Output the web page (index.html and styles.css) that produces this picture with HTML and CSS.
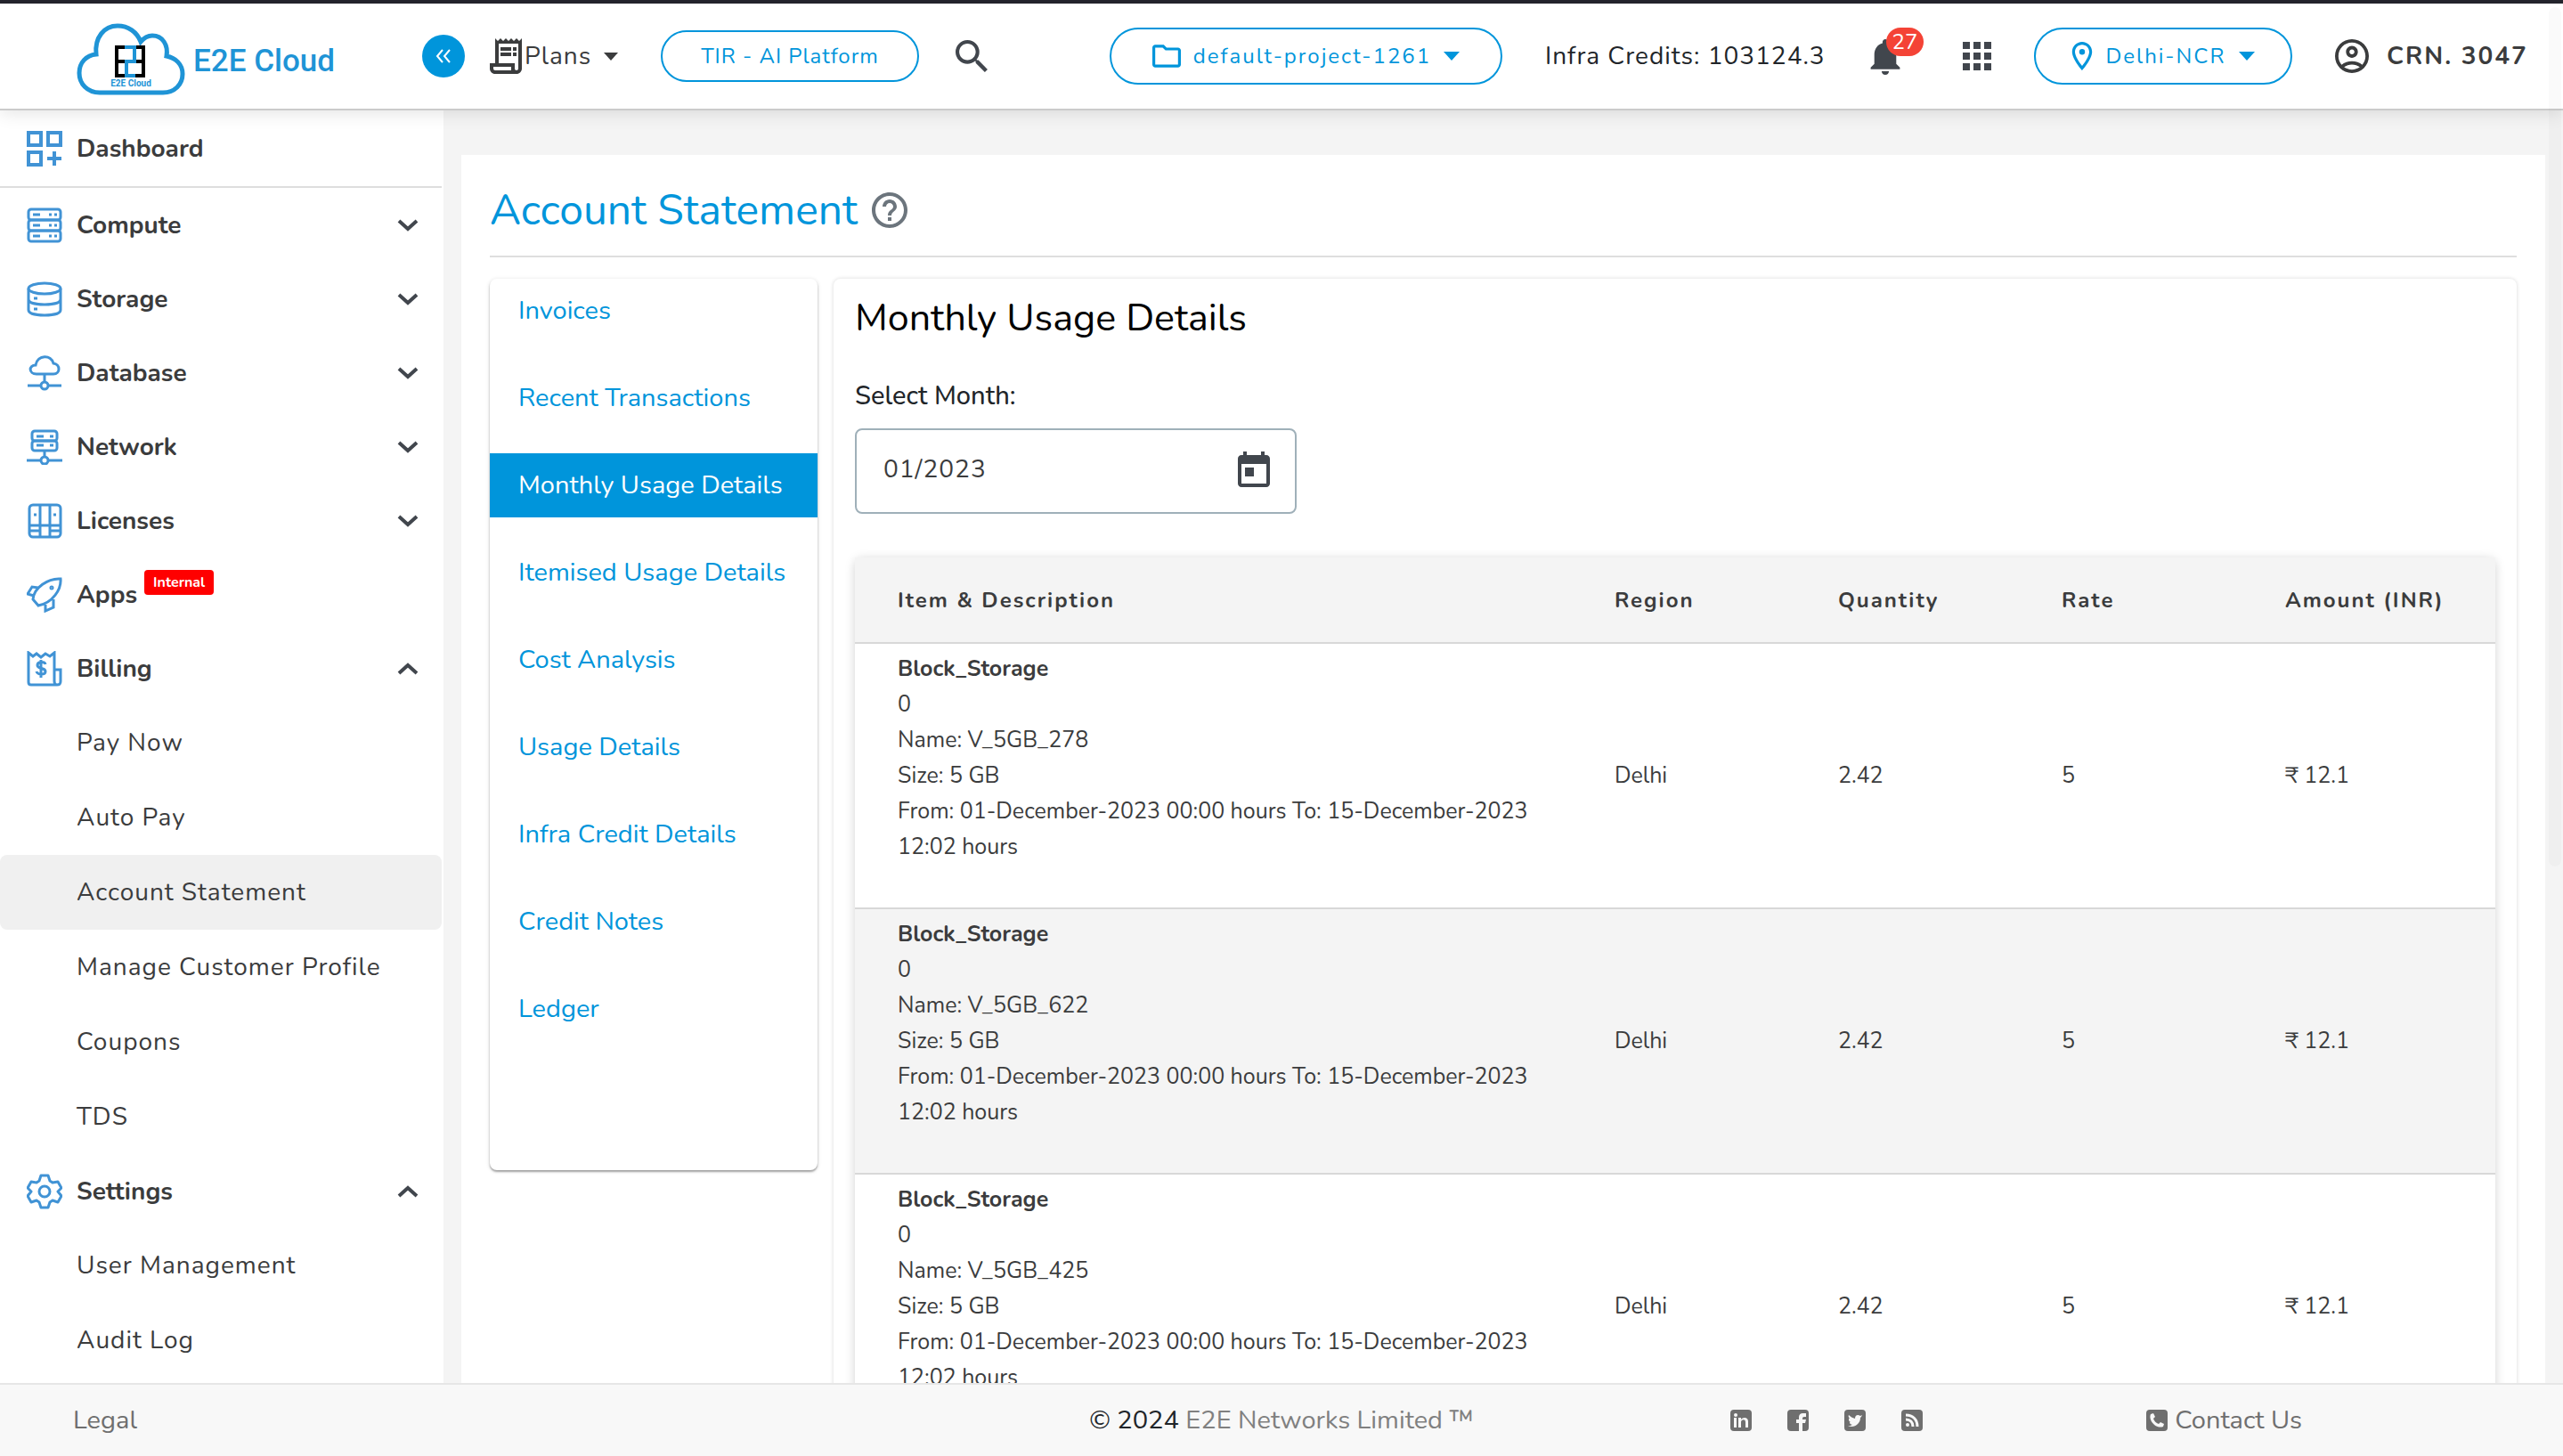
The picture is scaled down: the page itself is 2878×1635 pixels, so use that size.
FILE: index.html
```html
<!DOCTYPE html>
<html lang="en">
<head>
<meta charset="utf-8">
<title>Account Statement - E2E Cloud</title>
<meta name="viewport" content="width=device-width, initial-scale=1">
<link rel="stylesheet" href="styles.css">
</head>
<body>
<svg class="sprite" aria-hidden="true">
  <symbol id="chevron-down" viewBox="0 0 24 14"><path d="M2 2l10 9L22 2" fill="none" stroke="currentColor" stroke-width="4"/></symbol>
  <symbol id="chevron-up" viewBox="0 0 24 14"><path d="M2 12l10-9 10 9" fill="none" stroke="currentColor" stroke-width="4"/></symbol>
  <symbol id="caret" viewBox="0 0 18 10"><path d="M0 0h18L9 10z" fill="currentColor"/></symbol>
</svg>

<header class="topbar">
  <a class="brand" href="#">
    <svg class="brand-mark" viewBox="0 0 122 82" aria-hidden="true">
      <path d="M26 78C12 78 3 68 3 56c0-12 8-20 19-21C20 16 31 3 46 3c12 0 22 7 26 18 4-5 8-7 13-7 12 0 18 11 16 23 10 2 18 9 18 20 0 12-9 21-22 21z" fill="#fff" stroke="#1f94d6" stroke-width="5"/>
      <path d="M45 27h30v32H45zM45 43h10M66 43h9" fill="none" stroke="#000" stroke-width="4"/>
      <path d="M54 27h11v16h-9v16h10" fill="none" stroke="#1f94d6" stroke-width="4"/>
      <text class="brand-small" x="61" y="71" text-anchor="middle">E2E Cloud</text>
    </svg>
    <span class="brand-name">E2E Cloud</span>
  </a>
  <button class="collapse" type="button" aria-label="Collapse menu">
    <svg width="20" height="20" viewBox="0 0 20 20"><path d="M9 3l-6 7 6 7M17 3l-6 7 6 7" fill="none" stroke="#fff" stroke-width="2"/></svg>
  </button>
  <button class="plain plans" type="button">
    <svg width="36" height="40" viewBox="3 2 18 20"><path fill="currentColor" d="M19.500 3.500L18 2l-1.500 1.500L15 2l-1.500 1.500L12 2l-1.500 1.500L9 2 7.500 3.500 6 2v14H3v3c0 1.660 1.340 3 3 3h12c1.660 0 3-1.340 3-3V2l-1.500 1.500zM15 20H6c-.55 0-1-.45-1-1v-1h10v2zm4-1c0 .55-.45 1-1 1s-1-.45-1-1v-3H8V5h11v14zM9 7h6v2H9zM16 7h2v2h-2zM9 10h6v2H9zM16 10h2v2h-2z"/></svg>
    <span>Plans</span>
    <svg class="caret" width="16" height="9"><use href="#caret"/></svg>
  </button>
  <button class="pill pill-tir" type="button">TIR - AI Platform</button>
  <button class="plain search" type="button" aria-label="Search">
    <svg width="37" height="37" viewBox="3 3 18 18"><path fill="currentColor" d="M15.500 14h-.79l-.28-.27A6.470 6.470 0 0 0 16 9.500 6.500 6.500 0 1 0 9.500 16c1.610 0 3.090-.59 4.230-1.570l.27.28v.79l5 4.990L20.490 19l-4.990-5zm-6 0C7.010 14 5 11.990 5 9.500S7.010 5 9.500 5 14 7.010 14 9.500 11.990 14 9.500 14z"/></svg>
  </button>

  <div class="topbar-end">
    <button class="pill pill-project" type="button">
      <svg width="32" height="26" viewBox="2 4 20 16"><path fill="currentColor" d="M9.170 6l2 2H20v10H4V6h5.170M10 4H4c-1.100 0-2 .9-2 2v12c0 1.100.9 2 2 2h16c1.100 0 2-.9 2-2V8c0-1.100-.9-2-2-2h-8l-2-2z"/></svg>
      <span>default-project-1261</span>
      <svg class="caret" width="18" height="10"><use href="#caret"/></svg>
    </button>
    <span class="credits">Infra Credits: 103124.3</span>
    <button class="plain bell" type="button" aria-label="Notifications">
      <svg width="34" height="41" viewBox="4 2 16 20"><path fill="currentColor" d="M12 22c1.100 0 2-.9 2-2h-4c0 1.100.89 2 2 2zm6-6v-5c0-3.070-1.640-5.640-4.500-6.320V4c0-.83-.67-1.500-1.500-1.500s-1.500.67-1.500 1.500v.68C7.630 5.360 6 7.920 6 11v5l-2 2v1h16v-1l-2-2z"/></svg>
      <span class="count">27</span>
    </button>
    <button class="plain" type="button" aria-label="Apps">
      <svg width="32" height="32" viewBox="0 0 16 16"><path fill="currentColor" d="M0 0h4v4H0zM6 0h4v4H6zM12 0h4v4h-4zM0 6h4v4H0zM6 6h4v4H6zM12 6h4v4h-4zM0 12h4v4H0zM6 12h4v4H6zM12 12h4v4h-4z"/></svg>
    </button>
    <button class="pill pill-region" type="button">
      <svg class="pin" width="24" height="32" viewBox="5 2 14 20"><path fill="currentColor" d="M12 2C8.130 2 5 5.130 5 9c0 5.250 7 13 7 13s7-7.750 7-13c0-3.870-3.130-7-7-7zM7 9c0-2.760 2.240-5 5-5s5 2.240 5 5c0 2.880-2.880 7.190-5 9.880C9.920 16.210 7 11.850 7 9z"/><circle cx="12" cy="9" r="2" fill="currentColor"/></svg>
      <span>Delhi-NCR</span>
      <svg class="caret" width="18" height="10"><use href="#caret"/></svg>
    </button>
    <button class="plain account" type="button">
      <svg width="38" height="38" viewBox="2 2 20 20"><path fill="currentColor" d="M12 2C6.480 2 2 6.480 2 12s4.480 10 10 10 10-4.480 10-10S17.520 2 12 2zM7.350 18.500C8.660 17.560 10.260 17 12 17s3.340.56 4.650 1.500c-1.310.94-2.910 1.500-4.650 1.500s-3.340-.56-4.650-1.500zm10.790-1.380C16.450 15.800 14.320 15 12 15s-4.450.8-6.140 2.120C4.700 15.730 4 13.950 4 12c0-4.420 3.580-8 8-8s8 3.580 8 8c0 1.950-.7 3.730-1.860 5.120zM12 6c-1.930 0-3.500 1.570-3.500 3.500S10.070 13 12 13s3.500-1.570 3.500-3.500S13.930 6 12 6zm0 5c-.83 0-1.500-.67-1.500-1.500S11.170 8 12 8s1.500.67 1.500 1.500S12.830 11 12 11z"/></svg>
      <span>CRN. 3047</span>
    </button>
  </div>
</header>

<div class="body">
  <nav class="sidebar" aria-label="Main">
    <a class="side-item side-first" href="#">
      <svg class="side-icon" viewBox="0 0 40 40"><path d="M2 2h14v14H2zM24 2h14v14H24zM2 24h14v14H2zM31 23v16M23 31h16"/></svg>
      <span>Dashboard</span>
    </a>
    <a class="side-item" href="#">
      <svg class="side-icon thin" viewBox="0 0 40 40"><rect x="2" y="2" width="36" height="12" rx="3"/><rect x="2" y="14" width="36" height="12" rx="3"/><rect x="2" y="26" width="36" height="12" rx="3"/><path d="M7 8h8M25 8h3M31 8h3M7 20h8M25 20h3M31 20h3M7 32h8M25 32h3M31 32h3"/></svg>
      <span>Compute</span>
      <svg class="chevron"><use href="#chevron-down"/></svg>
    </a>
    <a class="side-item" href="#">
      <svg class="side-icon thin" viewBox="0 0 40 40"><ellipse cx="20" cy="8" rx="18" ry="6"/><path d="M2 8v24c0 4 8 6 18 6s18-2 18-6V8M2 20c0 4 8 6 18 6s18-2 18-6M8 19h4M8 31h4"/></svg>
      <span>Storage</span>
      <svg class="chevron"><use href="#chevron-down"/></svg>
    </a>
    <a class="side-item" href="#">
      <svg class="side-icon thin" viewBox="0 0 40 40"><path d="M11 21c-9 0-9-10-1-10C12-1 28-1 30 9c8 1 8 12 0 12zM20 21v10M1 34h14M25 34h14"/><circle cx="20" cy="34" r="4"/></svg>
      <span>Database</span>
      <svg class="chevron"><use href="#chevron-down"/></svg>
    </a>
    <a class="side-item" href="#">
      <svg class="side-icon thin" viewBox="0 0 40 40"><rect x="6" y="2" width="28" height="11" rx="3"/><rect x="6" y="13" width="28" height="11" rx="3"/><path d="M11 8h8M26 8h4M11 18h8M26 18h4M20 24v7M0 35h15M25 35h15"/><circle cx="20" cy="35" r="4"/></svg>
      <span>Network</span>
      <svg class="chevron"><use href="#chevron-down"/></svg>
    </a>
    <a class="side-item" href="#">
      <svg class="side-icon thin" viewBox="0 0 40 40"><rect x="3" y="2" width="35" height="36" rx="4"/><path d="M15 2v36M26 2v36M3 25h35M3 31h12M26 31h12M8 13h3M30 13h3"/></svg>
      <span>Licenses</span>
      <svg class="chevron"><use href="#chevron-down"/></svg>
    </a>
    <a class="side-item" href="#">
      <svg class="side-icon thin" viewBox="0 0 40 40"><path d="M13 32L7 25C8 12 24 1 38 2c1 12-9 27-25 30zM13 12L6 11 1 19l7 2M30 25v9l-9 4v-7"/><circle cx="28" cy="12" r="1"/></svg>
      <span>Apps</span>
      <span class="tag">Internal</span>
    </a>
    <a class="side-item" href="#">
      <svg class="side-icon thin" viewBox="0 0 40 40"><path d="M2 2l5 4 4-3 5 4 5-4 5 3 5-4v19h7v13c0 3-1 4-4 4H5c-2 0-3-1-3-3zM31 21v13c0 3 1 4 3 4"/><path d="M21 15c-1-4-9-3-9 1 0 5 9 2 9 7 0 4-9 4-10 0M16 10v20"/></svg>
      <span>Billing</span>
      <svg class="chevron"><use href="#chevron-up"/></svg>
    </a>
    <a class="sub-item" href="#">Pay Now</a>
    <a class="sub-item" href="#">Auto Pay</a>
    <a class="sub-item current" href="#" aria-current="page">Account Statement</a>
    <a class="sub-item" href="#">Manage Customer Profile</a>
    <a class="sub-item" href="#">Coupons</a>
    <a class="sub-item" href="#">TDS</a>
    <a class="side-item" href="#">
      <svg class="side-icon thin" viewBox="0 0 40 40"><path d="M16 2h8l2 6 3 2 6-1 4 7-4 4 4 5-4 7-6-2-3 2-2 6h-8l-2-6-3-2-6 2-4-7 4-5-4-4 4-7 6 1 3-2z" stroke-linejoin="round"/><circle cx="20" cy="20" r="6"/></svg>
      <span>Settings</span>
      <svg class="chevron"><use href="#chevron-up"/></svg>
    </a>
    <a class="sub-item" href="#">User Management</a>
    <a class="sub-item" href="#">Audit Log</a>
  </nav>

  <main class="main">
    <section class="sheet">
      <div class="sheet-head">
        <h1>Account Statement</h1>
        <svg width="40" height="40" viewBox="2 2 20 20" role="img" aria-label="Help"><path fill="currentColor" d="M11 18h2v-2h-2v2zm1-16C6.480 2 2 6.480 2 12s4.480 10 10 10 10-4.480 10-10S17.520 2 12 2zm0 18c-4.410 0-8-3.590-8-8s3.590-8 8-8 8 3.590 8 8-3.590 8-8 8zm0-14c-2.210 0-4 1.790-4 4h2c0-1.100.9-2 2-2s2 .9 2 2c0 2-3 1.750-3 5h2c0-2.250 3-2.500 3-5 0-2.210-1.790-4-4-4z"/></svg>
      </div>
      <div class="columns">
        <nav class="tabs" aria-label="Statement sections">
          <a href="#">Invoices</a>
          <a href="#">Recent Transactions</a>
          <a class="active" href="#" aria-current="true">Monthly Usage Details</a>
          <a href="#">Itemised Usage Details</a>
          <a href="#">Cost Analysis</a>
          <a href="#">Usage Details</a>
          <a href="#">Infra Credit Details</a>
          <a href="#">Credit Notes</a>
          <a href="#">Ledger</a>
        </nav>
        <section class="panel">
          <h2>Monthly Usage Details</h2>
          <label class="month-label" for="month">Select Month:</label>
          <div class="month">
            <input id="month" type="text" value="01/2023">
            <button class="plain" type="button" aria-label="Open calendar">
              <svg width="36" height="40" viewBox="3 1 18 20"><path fill="currentColor" d="M19 3h-1V1h-2v2H8V1H6v2H5c-1.110 0-2 .9-2 2v14c0 1.100.89 2 2 2h14c1.100 0 2-.9 2-2V5c0-1.100-.9-2-2-2zm0 16H5V8h14v11zM7 10h5v5H7z"/></svg>
            </button>
          </div>
          <table class="usage">
            <colgroup><col class="col-item"><col class="col-num"><col class="col-num"><col class="col-num"><col></colgroup>
            <thead>
              <tr><th scope="col">Item &amp; Description</th><th scope="col">Region</th><th scope="col">Quantity</th><th scope="col">Rate</th><th scope="col">Amount (INR)</th></tr>
            </thead>
            <tbody>
              <tr>
                <td><strong>Block_Storage</strong><br>0<br>Name: V_5GB_278<br>Size: 5 GB<br>From: 01-December-2023 00:00 hours To: 15-December-2023 12:02 hours</td>
                <td>Delhi</td><td>2.42</td><td>5</td><td>₹ 12.1</td>
              </tr>
              <tr>
                <td><strong>Block_Storage</strong><br>0<br>Name: V_5GB_622<br>Size: 5 GB<br>From: 01-December-2023 00:00 hours To: 15-December-2023 12:02 hours</td>
                <td>Delhi</td><td>2.42</td><td>5</td><td>₹ 12.1</td>
              </tr>
              <tr>
                <td><strong>Block_Storage</strong><br>0<br>Name: V_5GB_425<br>Size: 5 GB<br>From: 01-December-2023 00:00 hours To: 15-December-2023 12:02 hours</td>
                <td>Delhi</td><td>2.42</td><td>5</td><td>₹ 12.1</td>
              </tr>
            </tbody>
          </table>
        </section>
      </div>
    </section>
  </main>
</div>

<footer class="footer">
  <a class="legal" href="#">Legal</a>
  <p class="copyright">© 2024 <a href="#">E2E Networks Limited ™</a></p>
  <div class="social">
    <a href="#" aria-label="LinkedIn"><svg class="foot-icon" viewBox="0 0 24 24"><rect width="24" height="24" rx="4" fill="currentColor"/><path d="M4 9h3v11H4zM9 9h3v2c2-3 8-3 8 2v7h-3v-6c0-4-5-3-5 0v6H9z" fill="#f8f8f8"/><circle cx="6" cy="6" r="2" fill="#f8f8f8"/></svg></a>
    <a href="#" aria-label="Facebook"><svg class="foot-icon" viewBox="0 0 24 24"><rect width="24" height="24" rx="4" fill="currentColor"/><path d="M13 24v-9h-3v-4h3V9c0-4 2-5 5-5h3v4h-2c-2 0-2 1-2 3h4l-1 4h-3v9z" fill="#f8f8f8"/></svg></a>
    <a href="#" aria-label="Twitter"><svg class="foot-icon" viewBox="0 0 24 24"><rect width="24" height="24" rx="4" fill="currentColor"/><path d="M20 7l-2 2c0 7-7 12-14 9 2 0 3 0 5-1-2-1-3-1-3-3h1c-2-1-2-2-2-4h1C5 9 4 7 5 6c2 2 4 3 7 4 0-4 3-5 6-3l2-1-1 2z" fill="#f8f8f8"/></svg></a>
    <a href="#" aria-label="RSS"><svg class="foot-icon" viewBox="0 0 24 24"><rect width="24" height="24" rx="4" fill="currentColor"/><circle cx="7" cy="17" r="2" fill="#f8f8f8"/><path d="M5 11c5 0 8 3 8 8M5 6c8 0 13 5 13 13" fill="none" stroke="#f8f8f8" stroke-width="3"/></svg></a>
  </div>
  <a class="contact" href="#"><svg class="foot-icon" viewBox="0 0 24 24"><rect width="24" height="24" rx="4" fill="currentColor"/><path d="M5 5l3-1 2 4-2 2c1 3 3 5 6 6l2-2 4 2-1 3c-8 3-17-7-14-14z" fill="#f8f8f8"/></svg> Contact Us</a>
</footer>
<div class="scroll-thumb" aria-hidden="true"></div>
</body>
</html>
```

FILE: styles.css
```css
:root {
  --blue: #0095db;
  --icon-blue: #4193d5;
  --ink: #3b3c3d;
  --slate: #41464d;
  --grey: #6f6f6f;
  --wash: #f4f4f4;
  --line: #dedede;
}

* { box-sizing: border-box; }

body {
  margin: 0;
  height: 100vh;
  display: flex;
  flex-direction: column;
  overflow: hidden;
  background: var(--wash);
  color: #212529;
  font-family: Nunito, "Noto Sans", sans-serif;
  font-size: 28px;
  line-height: 40px;
}

a { color: inherit; text-decoration: none; }
button, input { font: inherit; color: inherit; letter-spacing: inherit; }
svg { flex: none; display: block; }
.sprite { position: absolute; width: 0; height: 0; }

/* Top bar */
.topbar {
  position: relative;
  z-index: 1;
  flex: none;
  display: flex;
  align-items: center;
  height: 124px;
  padding: 0 42px 0 86px;
  background: #fff;
  border-top: 4px solid #23242c;
  border-bottom: 2px solid #cbcbcb;
  box-shadow: 0 2px 20px rgba(0, 0, 0, .12);
  letter-spacing: 1px;
}
.brand { display: flex; align-items: center; gap: 9px; width: 388px; letter-spacing: normal; }
.brand-mark { width: 122px; height: 82px; margin-top: 8px; }
.brand-small { font: bold 10px Roboto, sans-serif; fill: #1f94d6; }
.brand-name { margin-top: 10px; font: 500 35px Roboto, sans-serif; color: #1f94d6; }
.collapse {
  display: grid;
  place-items: center;
  width: 48px;
  height: 48px;
  padding: 0;
  border: 0;
  border-radius: 50%;
  background: var(--blue);
}
.plain {
  display: flex;
  align-items: center;
  padding: 0;
  border: 0;
  background: none;
  color: var(--slate);
}
.plans { width: 144px; margin-left: 28px; gap: 3px; color: var(--ink); }
.plans .caret { margin-left: auto; }
.search { margin-left: 41px; }
.pill {
  display: flex;
  align-items: center;
  justify-content: center;
  height: 64px;
  padding: 0;
  border: 2px solid var(--blue);
  border-radius: 32px;
  background: #fff;
  color: var(--blue);
  font-size: 24px;
}
.pill-tir { width: 290px; height: 58px; margin-left: 48px; }
.pill-project { width: 441px; gap: 14px; letter-spacing: 2px; }
.pill-region { width: 290px; gap: 14px; letter-spacing: 2px; }
.topbar-end { display: flex; align-items: center; gap: 48px; margin-left: auto; }
.credits { width: 317px; white-space: nowrap; }
.bell { position: relative; width: 56px; letter-spacing: normal; }
.count {
  position: absolute;
  left: 18px;
  top: -12px;
  min-width: 42px;
  height: 32px;
  border-radius: 16px;
  background: #f44336;
  color: #fff;
  font-size: 24px;
  line-height: 32px;
  text-align: center;
}
.account { width: 214px; gap: 20px; color: var(--ink); font-weight: 700; letter-spacing: 2px; white-space: nowrap; }

/* Sidebar */
.body { flex: 1; min-height: 0; display: flex; }
.sidebar {
  flex: none;
  width: 498px;
  padding-right: 2px;
  overflow: hidden auto;
  scrollbar-width: none;
  background: #fff;
  color: var(--ink);
}
.side-item {
  display: flex;
  align-items: center;
  height: 83px;
  padding: 0 26px 0 30px;
  font-weight: 700;
}
.side-first { height: 87px; border-bottom: 2px solid var(--line); }
.side-icon {
  width: 40px;
  height: 40px;
  margin-right: 16px;
  fill: none;
  stroke: var(--icon-blue);
  stroke-width: 4;
}
.side-icon.thin { stroke-width: 3; }
.chevron { width: 24px; height: 14px; margin-left: auto; color: var(--slate); }
.tag {
  align-self: flex-start;
  margin: 14px 0 0 8px;
  padding: 0 10px;
  border-radius: 4px;
  background: #f00;
  color: #fff;
  font-size: 16px;
  line-height: 28px;
}
.sub-item {
  display: block;
  padding: 22px 0 22px 86px;
  border-radius: 8px;
  letter-spacing: 1px;
}
.sub-item.current { background: #f0f0f0; }

/* Content */
.main {
  flex: 1;
  min-width: 0;
  padding: 50px 20px 0;
  overflow: hidden auto;
  scrollbar-width: none;
}
.sheet { padding: 28px 32px 0; background: #fff; }
.sheet-head {
  display: flex;
  align-items: center;
  gap: 16px;
  padding-bottom: 17px;
  border-bottom: 2px solid var(--line);
  color: #6c757d;
}
h1 { margin: 0; font-size: 48px; font-weight: 400; line-height: 68px; color: var(--blue); }
.columns { display: flex; align-items: flex-start; gap: 18px; padding-top: 24px; }
.tabs {
  flex: none;
  display: flex;
  flex-direction: column;
  gap: 26px;
  width: 368px;
  padding-bottom: 145px;
  border-radius: 8px;
  box-shadow: 0 2px 2px rgba(0, 0, 0, .3), 0 1px 5px rgba(0, 0, 0, .14);
  color: var(--blue);
  font-size: 29px;
}
.tabs a { padding: 16px 0 16px 32px; white-space: nowrap; }
.tabs .active { background: var(--blue); color: #fff; }
.panel {
  flex: 1;
  min-width: 0;
  padding: 12px 24px 40px;
  border-radius: 8px;
  box-shadow: 0 0 4px rgba(0, 0, 0, .16);
}
h2 { margin: 0; font-size: 43px; font-weight: 400; line-height: 64px; color: #000; }
.month-label { display: block; margin-top: 36px; font-size: 29px; font-weight: 500; }
.month {
  display: flex;
  align-items: center;
  justify-content: space-between;
  width: 496px;
  height: 96px;
  margin: 16px 0 49px;
  padding: 0 28px 4px 30px;
  border: 2px solid #9fb0b9;
  border-radius: 8px;
}
.month input {
  width: 300px;
  padding: 0;
  border: 0;
  outline: 0;
  background: none;
  color: var(--ink);
  letter-spacing: 1px;
}
.usage {
  width: 100%;
  table-layout: fixed;
  border-collapse: separate;
  border-spacing: 0;
  border-radius: 8px;
  box-shadow: 0 2px 12px rgba(0, 0, 0, .18);
  color: var(--ink);
  font-size: 25px;
}
.col-item { width: 45%; }
.col-num { width: 251px; }
.usage th, .usage td { padding: 8px 24px; text-align: left; border-bottom: 2px solid #d8d8d8; }
.usage th:first-child, .usage td:first-child { padding-left: 48px; }
.usage th { height: 97px; background: var(--wash); font-size: 24px; font-weight: 700; letter-spacing: 2px; }
.usage td:first-child { padding-bottom: 48px; }
.usage tbody tr:nth-child(even) { background: var(--wash); }
.usage strong { font-weight: 700; }

/* Footer */
.footer {
  flex: none;
  display: grid;
  grid-template-columns: 34fr 20fr 13fr 13fr;
  align-items: center;
  height: 82px;
  border-top: 2px solid #e6e6e6;
  background: #f8f8f8;
  color: var(--grey);
  font-size: 29px;
}
.legal { padding-left: 82px; }
.copyright { margin: 0; color: #212529; }
.copyright a { color: #808080; }
.social { display: flex; gap: 40px; }
.foot-icon { width: 24px; height: 24px; }
.contact { display: flex; align-items: center; gap: 8px; }

.scroll-thumb {
  position: fixed;
  z-index: 2;
  top: 8px;
  right: 2px;
  width: 14px;
  height: 59vh;
  border-radius: 7px;
  background: rgba(0, 0, 0, .02);
}
```
